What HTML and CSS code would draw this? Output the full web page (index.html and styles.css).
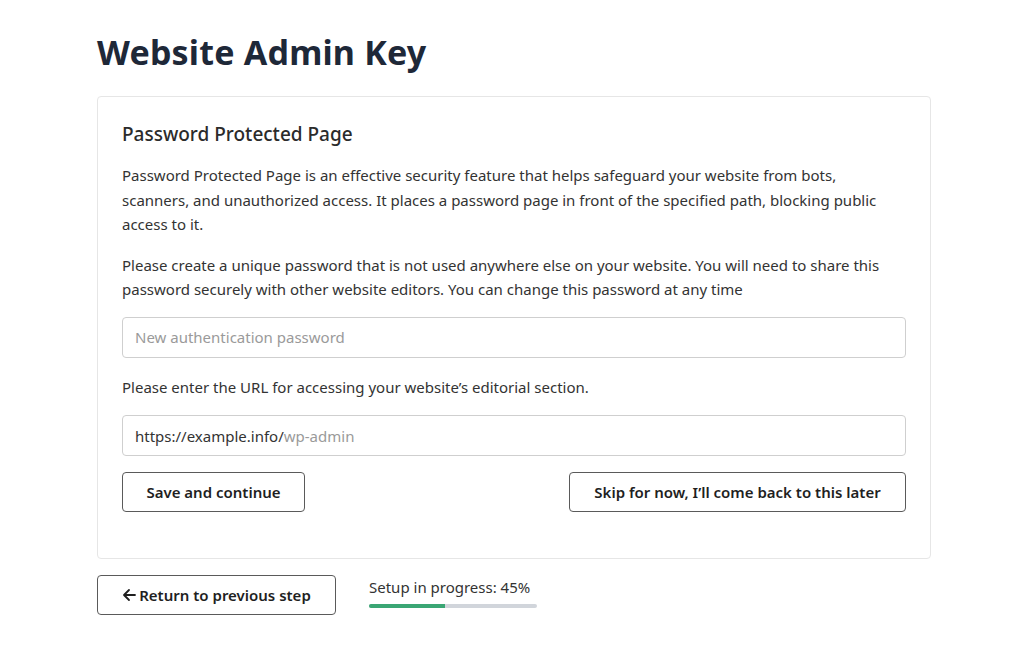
FILE: index.html
```html
<!DOCTYPE html>
<html lang="en">
<head>
<meta charset="utf-8">
<title>Website Admin Key</title>
<link rel="stylesheet" href="styles.css">
</head>
<body>
<main class="page">
  <h1 class="title">Website Admin Key</h1>
  <section class="card">
    <h2 class="card-title">Password Protected Page</h2>
    <p class="text">Password Protected Page is an effective security feature that helps safeguard your website from bots, scanners, and unauthorized access. It places a password page in front of the specified path, blocking public access to it.</p>
    <p class="text">Please create a unique password that is not used anywhere else on your website. You will need to share this password securely with other website editors. You can change this password at any time</p>
    <div class="field field-first"><input class="input" type="text" placeholder="New authentication password"></div>
    <p class="text label">Please enter the URL for accessing your website’s editorial section.</p>
    <div class="field url"><span class="prefix">https://example.info/</span><span class="suffix">wp-admin</span></div>
    <div class="actions">
      <button class="btn btn-save">Save and continue</button>
      <button class="btn btn-skip">Skip for now, I’ll come back to this later</button>
    </div>
  </section>
  <footer class="footer">
    <button class="btn btn-back"><svg class="arrow" width="14" height="14" viewBox="0 0 14 14" aria-hidden="true"><path d="M13 7H2.2M7 2L2 7l5 5" fill="none" stroke="#1f1f1f" stroke-width="1.8" stroke-linecap="round" stroke-linejoin="round"/></svg>Return to previous step</button>
    <div class="progress">
      <div class="progress-label">Setup in progress: 45%</div>
      <div class="progress-track"><div class="progress-fill" style="width:45%"></div></div>
    </div>
  </footer>
</main>
</body>
</html>
```
FILE: styles.css
```css
* { box-sizing: border-box; }
html, body { margin: 0; padding: 0; background: #fff; }
body {
  font-family: "Noto Sans", "Open Sans", sans-serif;
  color: #333;
  font-size: 15px;
}
.page {
  width: 834px;
  margin-left: 97px;
  padding-top: 26px;
}
.title {
  margin: 0 0 18px;
  font-size: 34px;
  line-height: 52px;
  font-weight: 700;
  color: #1e2838;
  letter-spacing: 0.2px;
}
.card {
  border: 1px solid #e6e6e6;
  border-radius: 4px;
  padding: 22px 24px 46px;
}
.card-title {
  margin: 0 0 14px;
  font-size: 19px;
  line-height: 30px;
  font-weight: 500;
  color: #2b2b2b;
}
.text {
  margin: 0 0 16px;
  font-size: 15px;
  line-height: 24.5px;
  color: #333;
}
.field {
  height: 41px;
  border: 1px solid #cfcfcf;
  border-radius: 4px;
  display: flex;
  align-items: center;
  padding: 0 12px;
  margin: 0 0 16px;
}
.field-first { margin: -1px 0 17px; }
.input {
  border: 0;
  outline: none;
  padding: 0;
  width: 100%;
  font: inherit;
  font-size: 15px;
  color: #333;
  background: transparent;
}
.input::placeholder { color: #9a9a9a; }
.label { margin-bottom: 16px; }
.url { font-size: 15px; }
.prefix { color: #333; }
.suffix { color: #9a9a9a; }
.actions {
  display: flex;
  justify-content: space-between;
}
.btn {
  font-family: inherit;
  font-size: 15px;
  font-weight: 600;
  color: #1f1f1f;
  background: #fff;
  border: 1px solid #5a5a5a;
  border-radius: 4px;
  height: 40px;
  padding: 0 8px;
  white-space: nowrap;
  cursor: pointer;
}
.btn-save { width: 183px; }
.btn-skip { width: 337px; }
.footer {
  display: flex;
  align-items: flex-start;
  gap: 33px;
  margin-top: 16px;
}
.btn-back { width: 239px; display: flex; align-items: center; justify-content: center; }
.arrow { margin-right: 3px; }
.progress { padding-top: 2px; width: 168px; }
.progress-label {
  font-size: 15px;
  line-height: 20px;
  color: #333;
  white-space: nowrap;
}
.progress-track {
  margin-top: 7px;
  height: 4px;
  background: #d1d5db;
  border-radius: 2px;
  overflow: hidden;
}
.progress-fill {
  height: 100%;
  background: #3aa674;
}
```
